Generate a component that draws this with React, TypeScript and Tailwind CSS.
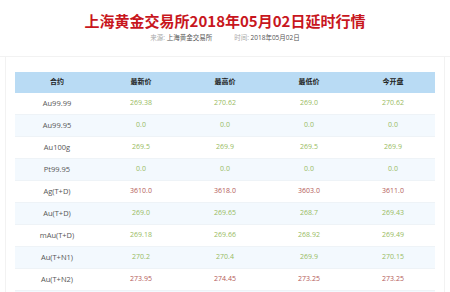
import React from "react";

const G = "text-[#98bb62]";
const R = "text-[#b35a58]";

const rows: { name: string; vals: string[]; c: string }[] = [
  { name: "Au99.99", vals: ["269.38", "270.62", "269.0", "270.62"], c: G },
  { name: "Au99.95", vals: ["0.0", "0.0", "0.0", "0.0"], c: G },
  { name: "Au100g", vals: ["269.5", "269.9", "269.5", "269.9"], c: G },
  { name: "Pt99.95", vals: ["0.0", "0.0", "0.0", "0.0"], c: G },
  { name: "Ag(T+D)", vals: ["3610.0", "3618.0", "3603.0", "3611.0"], c: R },
  { name: "Au(T+D)", vals: ["269.0", "269.65", "268.7", "269.43"], c: G },
  { name: "mAu(T+D)", vals: ["269.18", "269.66", "268.92", "269.49"], c: G },
  { name: "Au(T+N1)", vals: ["270.2", "270.4", "269.9", "270.15"], c: G },
  { name: "Au(T+N2)", vals: ["273.95", "274.45", "273.25", "273.25"], c: R },
];

const headers = ["合约", "最新价", "最高价", "最低价", "今开盘"];

export default function App() {
  return (
    <div
      className="w-[450px] h-[292px] overflow-hidden bg-white"
      style={{ fontFamily: '"Open Sans", "Noto Sans CJK SC", sans-serif' }}
    >
      <div className="h-[57px] border-b border-[#f2f2f2] flex flex-col items-center">
        <div
          className="mt-[11px] text-[15px] leading-[20px] font-bold text-[#c8161d]"
          style={{ fontFamily: '"Noto Sans CJK SC", sans-serif' }}
        >
          上海黄金交易所2018年05月02日延时行情
        </div>
        <div className="mt-[1px] flex text-[6.5px] leading-[12px] text-[#555]">
          <span>
            <span className="text-[#aaa]">来源: </span>上海黄金交易所
          </span>
          <span className="ml-[22px]">
            <span className="text-[#aaa]">时间: </span>2018年05月02日
          </span>
        </div>
      </div>
      <div className="mx-[5px] border-x border-[#f2f2f2] pt-[15px] px-[9px] h-[300px]">
        <div className="grid grid-cols-5 h-[21px] items-center bg-[#b9dbf4] text-[7px] text-[#222] font-semibold text-center">
          {headers.map((h) => (
            <div key={h}>{h}</div>
          ))}
        </div>
        {rows.map((r, i) => (
          <div
            key={r.name}
            className={`grid grid-cols-5 h-[22px] items-center text-[7px] text-center border-b border-[#eef3f7] ${
              i % 2 === 0 ? "bg-white" : "bg-[#f3f9fe]"
            }`}
          >
            <div className="text-[#555] text-[7.5px]">{r.name}</div>
            {r.vals.map((v, j) => (
              <div key={j} className={r.c}>
                {v}
              </div>
            ))}
          </div>
        ))}
        <div className="h-[4px] bg-[#f3f9fe]" />
      </div>
    </div>
  );
}
